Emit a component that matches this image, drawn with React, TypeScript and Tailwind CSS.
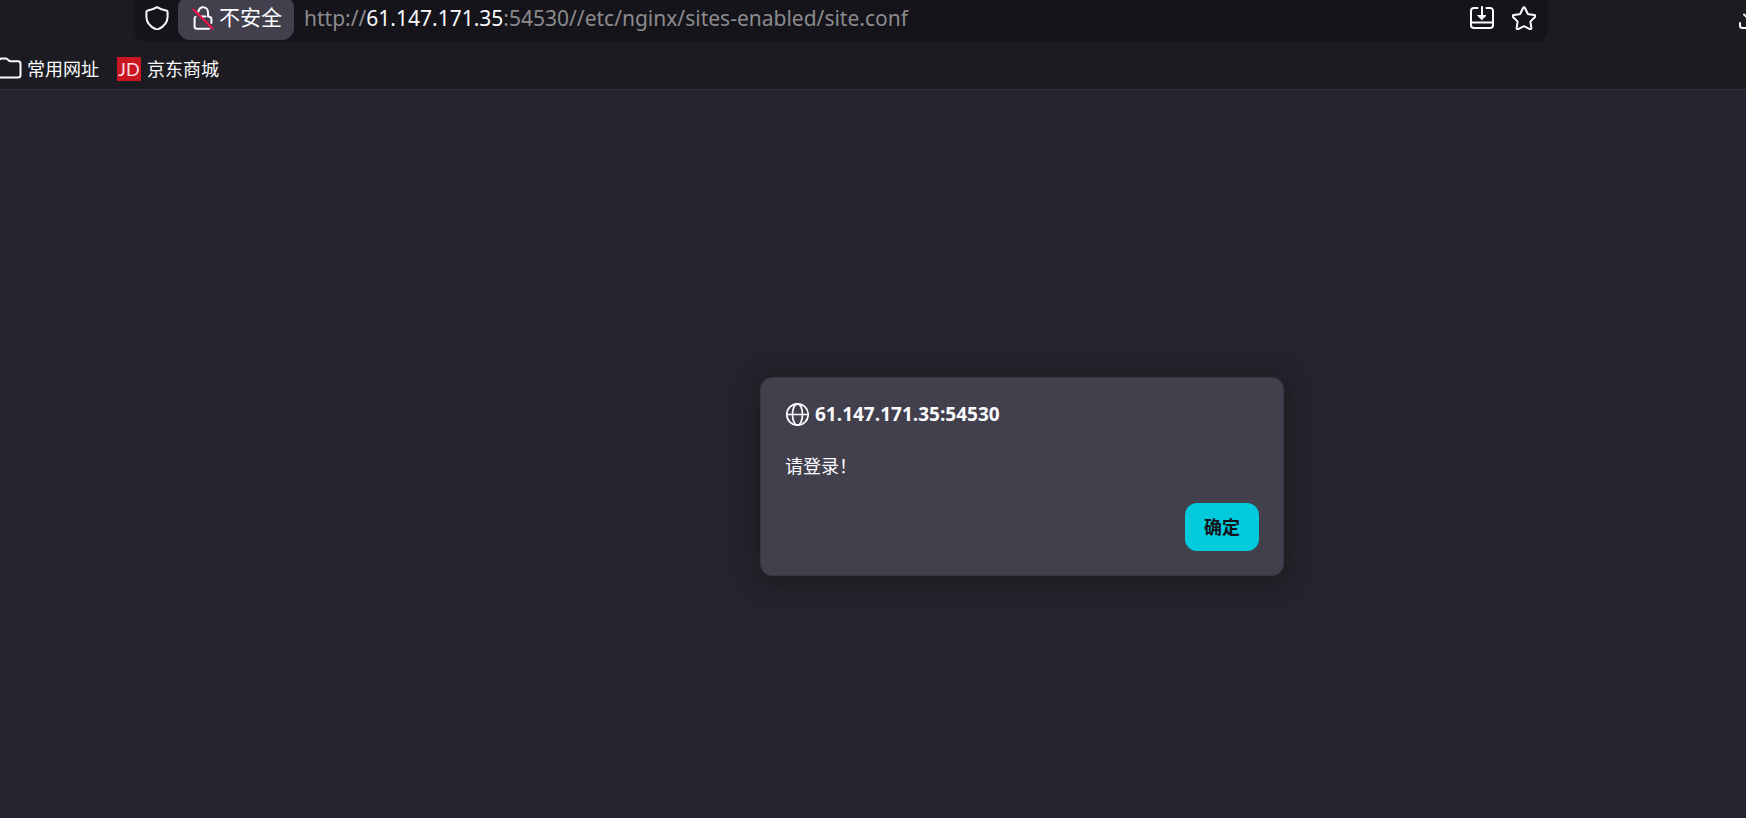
import type { ReactNode } from "react";

interface IconProps {
  className?: string;
  children: ReactNode;
}

const Icon = ({ className = "", children }: IconProps) => (
  <svg
    viewBox="0 0 24 24"
    fill="none"
    stroke="currentColor"
    strokeWidth="2"
    strokeLinecap="round"
    strokeLinejoin="round"
    aria-hidden="true"
    className={`size-6 shrink-0 ${className}`}
  >
    {children}
  </svg>
);

const ShieldIcon = () => (
  <Icon>
    <path d="M12 1.2C9.3 3 6.2 4 2.8 4.4 1.9 4.5 1.4 5.1 1.4 6v4.500C1.400 16 4.600 20.500 10.800 23.200q1.200.5 2.400 0C19.400 20.500 22.600 16 22.600 10.500V6c0-.9-.5-1.500-1.400-1.600C17.800 4 14.700 3 12 1.200z" />
  </Icon>
);

const InsecureLockIcon = () => (
  <Icon>
    <path d="M7.400 5.500C8 3 9.600 1.200 12 1.200c2.900 0 5 2.300 5 5.300V10" />
    <path d="M4.500 10.800c-.6.4-.9 1-.9 1.700v8c0 1.400.9 2.300 2.300 2.300h12.200M17 10.500c2.200 0 3.400.8 3.400 2.500v4M10 10.500h4.500" />
    <path d="M2.500 3.500l19 19" stroke="#ff0f45" />
  </Icon>
);

const SaveIcon = () => (
  <Icon>
    <path d="M7.500 2H4C2.300 2 1 3.200 1 4.800v14.400C1 20.800 2.300 22 4 22h16c1.700 0 3-1.200 3-2.800V4.800C23 3.200 21.700 2 20 2h-3.500M1.500 16.500h21M12 1v9" />
    <path d="M8 9.500h8l-4 4z" fill="currentColor" strokeWidth="1" />
  </Icon>
);

const StarIcon = () => (
  <Icon>
    <path d="M11 2c.4-.9 1.600-.9 2 0l2.600 5.500c.2.4.5.7 1 .7l5.800.8c1 .2 1.300 1.300.6 2l-4.200 4.100c-.3.3-.5.7-.4 1.100l1 5.700c.2 1-.8 1.600-1.600 1.200L12.500 20.400c-.3-.2-.7-.2-1 0L6.200 23.100c-.8.4-1.800-.2-1.600-1.200l1-5.700c.1-.4-.1-.8-.4-1.100L1 11c-.7-.7-.4-1.800.6-2l5.800-.8c.5 0 .8-.3 1-.7z" />
  </Icon>
);

const DownloadIcon = () => (
  <Icon>
    <path d="M12 1v14M5 8.500l7 6.500 7-6.500M1 17v2.500C1 21 2 22 3.500 22h17c1.500 0 2.500-1 2.500-2.500V17" />
  </Icon>
);

const FolderIcon = () => (
  <Icon>
    <path d="M1 19V4c0-1.500 1-2.500 2.500-2.500h4c.8 0 1.400.2 2 .8l1.300 1.200c.5.500 1 .7 1.700.7h7.500c1.500 0 2.500 1 2.500 2.500V18c0 1.500-1 2.500-2.500 2.500H3C1.800 20.500 1 20 1 19z" />
  </Icon>
);

const GlobeIcon = () => (
  <Icon>
    <g strokeWidth="1.700">
      <circle cx="12.500" cy="12.500" r="10.700" />
      <ellipse cx="12.500" cy="12.500" rx="5" ry="10.700" />
      <path d="M2 12.500h21" />
    </g>
  </Icon>
);

const AddressBar = () => (
  <div className="flex h-[42px] items-start justify-between">
    <div className="-mt-1.5 ml-[134px] flex h-12 min-w-0 grow items-center rounded-xl bg-[#15141a] pl-[11px] pr-3">
      <button type="button" aria-label="Tracking protection">
        <ShieldIcon />
      </button>
      <button
        type="button"
        className="ml-[9px] flex h-11 shrink-0 items-center gap-1 rounded-xl bg-[#42404d] pl-[13px] pr-3 text-[21px]"
      >
        <InsecureLockIcon />
        不安全
      </button>
      <a
        href="#"
        className="ml-[10px] grow truncate font-['Noto_Sans',sans-serif] text-[21px] leading-8 text-[#8b8b8e]"
      >
        http://<span className="text-[#fbfbfe]">61.147.171.35</span>
        :54530//etc/nginx/sites-enabled/site.conf
      </a>
      <div className="flex shrink-0 gap-[18px]">
        <button type="button" aria-label="Save page">
          <SaveIcon />
        </button>
        <button type="button" aria-label="Bookmark page">
          <StarIcon />
        </button>
      </div>
    </div>
    <div className="flex w-[198px] shrink-0 justify-end overflow-hidden pt-[6px]">
      <button type="button" aria-label="Downloads" className="-mr-[17px]">
        <DownloadIcon />
      </button>
    </div>
  </div>
);

const BookmarksBar = () => (
  <nav className="flex h-[47px] items-center gap-[18px] overflow-hidden pt-[6px] text-lg">
    <a href="#" className="-ml-[2px] flex items-center gap-[5px]">
      <FolderIcon />
      常用网址
    </a>
    <a href="#" className="flex items-center gap-[6px]">
      <span className="flex size-6 items-center justify-center bg-[#c81623] font-['Lato','Noto_Sans',sans-serif] text-lg leading-6 text-[#fbdfe1]">
        JD
      </span>
      京东商城
    </a>
  </nav>
);

const AlertDialog = () => (
  <div
    role="alertdialog"
    aria-labelledby="alert-title"
    aria-describedby="alert-message"
    className="flex w-[524px] flex-col rounded-xl border border-[#38363f] bg-[#42404d] px-6 pb-6 pt-[22px] shadow-[0_3px_20px_3px_#1c1c1e]"
  >
    <div className="flex items-center gap-[6px]">
      <GlobeIcon />
      <h1 id="alert-title" className="text-[19px] font-bold leading-7">
        61.147.171.35:54530
      </h1>
    </div>
    <p id="alert-message" className="mt-6 text-lg leading-7">
      请登录！
    </p>
    <button
      type="button"
      className="mt-[23px] h-12 self-end rounded-xl bg-[#00cadb] px-[19px] text-lg font-bold text-[#15141a]"
    >
      确定
    </button>
  </div>
);

const App = () => {
  return (
    <div className="flex min-h-screen flex-col overflow-hidden bg-[#25232d] font-['Open_Sans','Noto_Sans_CJK_SC',sans-serif] text-[#fbfbfe]">
      <header className="border-b border-[#333238] bg-[#1c1b21]">
        <AddressBar />
        <BookmarksBar />
      </header>
      <main className="flex justify-center pl-[298px] pt-[287px]">
        <AlertDialog />
      </main>
    </div>
  );
};

export default App;
